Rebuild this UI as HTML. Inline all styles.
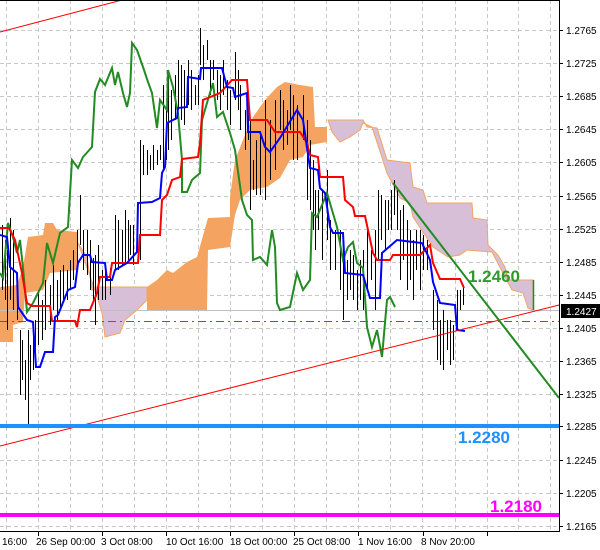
<!DOCTYPE html>
<html><head><meta charset="utf-8"><style>
html,body{margin:0;padding:0;background:#fff;width:600px;height:550px;overflow:hidden}
svg{display:block;font-family:"Liberation Sans",sans-serif}
</style></head><body>
<svg width="600" height="550" viewBox="0 0 600 550" xmlns="http://www.w3.org/2000/svg">
<rect width="600" height="550" fill="#fff"/>
<g stroke="#c8c8c8" stroke-width="1" stroke-dasharray="4,3" shape-rendering="crispEdges">
<path d="M6.5 0V531M38.5 0V531M70.5 0V531M102.5 0V531M134.5 0V531M166.5 0V531M198.5 0V531M230.5 0V531M262.5 0V531M294.5 0V531M326.5 0V531M358.5 0V531M390.5 0V531M422.5 0V531M455.5 0V531M487.5 0V531M518.5 0V531M550.5 0V531"/>
<path d="M0 30.5H559M0 63.5H559M0 96.5H559M0 129.5H559M0 162.5H559M0 196.5H559M0 229.5H559M0 262.5H559M0 295.5H559M0 328.5H559M0 361.5H559M0 394.5H559M0 426.5H559M0 460.5H559M0 493.5H559M0 526.5H559"/>
</g>
<!-- clouds -->
<polygon fill="#f4a460" points="0,287 17,285 23,267 28,237 43,235 45,223 53,223 57,230 77,232 77,270 50,273 43,290 25,293 23,322 13,325 13,342 0,342"/>
<polygon fill="#d8bfd8" stroke="#f4a460" stroke-width="1" points="78,243 87,257 92,290 97,287 147,287 147,300 137,310 125,320 120,333 105,337 102,313 95,290"/>
<polygon fill="#f4a460" points="147,287 157,280 167,270 173,273 187,262 197,257 208,218 230,217 230,197 235,160 247,130 253,117 265,100 277,87 285,82 300,85 313,87 315,127 327,127 327,142 310,145 303,157 290,160 280,178 267,187 250,190 240,200 235,215 230,247 208,250 207,310 147,310"/>
<polygon fill="#d8bfd8" stroke="#f4a460" stroke-width="1" points="328,120 363,120 367,127 377,128 387,160 410,163 413,187 423,190 427,203 472,203 473,218 487,220 488,245 498,255 505,267 508,280 533,280 533,310 528,308 523,293 512,290 505,277 492,252 467,250 460,255 448,257 433,247 413,217 410,203 400,198 387,173 372,127 363,123 360,130 350,137 340,142 332,132"/>
<line x1="533.5" y1="280" x2="533.5" y2="310" stroke="#228b22" stroke-width="1.5"/>
<!-- gray & dashed -->
<line x1="0" y1="310.5" x2="559" y2="310.5" stroke="#c0c0c0" stroke-width="1"/>
<line x1="0" y1="321.5" x2="559" y2="321.5" stroke="#228b22" stroke-width="1" stroke-dasharray="8,4,2,4"/>
<!-- bars -->
<g stroke="#000" stroke-width="1">
<path d="M2.5 225V290M5.5 240V300M7.5 250V330M10.5 218V300M13.5 230V310M17.5 280V320M20.5 330V395M22.5 340V380M25.5 360V400M28.5 330V425M30.5 345V380M33.5 330V370M35.5 320V365M38.5 290V345M42.5 300V340M45.5 280V330M50.5 285V325M53.5 265V310M57.5 280V320M60.5 270V310M63.5 265V300M67.5 270V300M70.5 260V290M73.5 250V280M77.5 230V270M80.5 195V245M83.5 230V270M87.5 230V275M90.5 240V290M93.5 258V300M95.5 255V325M98.5 245V300M102.5 270V300M105.5 270V300M110.5 268V295M115.5 215V270M118.5 220V270M122.5 230V265M125.5 210V265M128.5 220V260M130.5 225V255M133.5 225V265M137.5 215V250M140.5 140V260M143.5 145V175M147.5 150V175M150.5 155V170M153.5 145V170M157.5 150V165M160.5 145V160M163.5 85V170M166.5 110V160M168.5 70V150M171.5 90V140M175.5 75V120M178.5 60V110M181.5 65V120M184.5 70V125M188.5 60V105M191.5 70V110M195.5 85V105M198.5 75V105M200.5 28V65M203.5 45V80M207.5 40V60M210.5 60V95M213.5 60V80M217.5 70V100M220.5 75V110M223.5 60V95M227.5 80V110M230.5 90V125M235.5 52V100M238.5 70V110M240.5 85V130M245.5 110V150M248.5 100V140M250.5 120V210M253.5 160V190M256.5 140V195M260.5 135V195M265.5 100V200M270.5 120V180M275.5 100V170M280.5 90V130M283.5 100V150M287.5 110V145M290.5 85V130M293.5 95V160M297.5 105V160M303.5 95V140M307.5 120V200M310.5 140V210M313.5 160V230M315.5 190V250M318.5 190V230M322.5 190V260M327.5 170V240M330.5 220V270M335.5 230V270M340.5 230V290M343.5 250V320M347.5 260V300M350.5 250V290M353.5 255V300M357.5 270V310M360.5 260V300M363.5 250V310M367.5 230V290M371.5 250V280M375.5 230V310M378.5 190V260M381.5 195V240M385.5 200V250M388.5 200V230M391.5 190V230M394.5 180V215M397.5 190V230M400.5 210V280M403.5 205V260M407.5 220V290M410.5 230V280M413.5 240V300M416.5 230V270M420.5 230V290M423.5 235V270M427.5 240V270M433.5 290V330M437.5 300V360M440.5 320V365M443.5 310V370M447.5 320V350M450.5 320V365M453.5 325V360M457.5 290V330M460.5 290V310M463.5 285V305"/>
</g>
<!-- lines -->
<polyline fill="none" stroke="#228b22" stroke-width="2" points="0,273 3,278 8,223 13,237 17,253 20,240 23,268 27,312 33,303 43,283 47,243 53,263 60,233 68,227 72,160 78,168 83,157 92,147 95,92 100,79 105,85 112,68 115,85 118,72 123,93 127,107 130,93 132,43 137,50 143,67 148,82 152,93 157,128 160,100 167,110 168,70 173,87 178,113 182,160 182,192 187,192 192,180 200,173 202,120 207,103 213,83 217,117 223,112 230,133 235,150 242,200 247,215 252,220 253,260 260,257 267,265 272,230 275,247 277,303 280,310 290,307 297,273 303,290 310,280 312,213 317,217 327,193 337,227 343,260 348,247 353,242 357,263 363,268 367,327 372,347 377,330 382,357 387,300 390,297 395,307"/>
<polyline fill="none" stroke="#ff0000" stroke-width="2" points="0,228 9,228 15,240 22,273 27,303 32,306 50,306 52,321 75,321 77,327 80,310 90,310 97,293 100,277 110,277 112,263 138,263 140,235 160,235 162,200 167,195 172,180 180,177 182,159 198,157 200,143 203,100 220,93 232,80 247,80 250,120 267,120 275,132 300,132 307,143 310,155 318,157 320,177 343,177 345,200 353,207 355,216 365,216 373,253 377,260 390,260 393,255 420,255 430,245 433,263 440,279 460,279 464,288"/>
<polyline fill="none" stroke="#0000ff" stroke-width="2" points="0,235 7,237 10,267 17,273 18,307 27,320 33,322 36,367 40,367 45,352 53,352 55,317 58,315 68,290 75,287 78,263 83,255 90,255 92,262 105,263 107,280 112,280 115,270 127,263 137,252 138,203 152,202 160,198 162,173 165,167 167,123 177,118 178,108 187,107 188,77 200,79 201,68 222,68 227,87 233,88 235,97 247,93 248,132 260,132 265,147 270,152 280,138 297,110 303,120 307,148 310,168 318,170 320,188 325,193 330,227 333,233 343,233 345,273 363,275 370,298 380,298 382,253 397,240 413,242 422,243 430,260 433,282 440,303 455,305 457,330 465,331"/>
<!-- trend lines -->
<line x1="0" y1="32" x2="122" y2="0" stroke="#ff0000" stroke-width="1"/>
<line x1="0" y1="446" x2="559" y2="305" stroke="#ff0000" stroke-width="1"/>
<line x1="393" y1="183" x2="559" y2="398" stroke="#228b22" stroke-width="2"/>
<!-- horizontal levels -->
<rect x="0" y="424" width="559" height="4" fill="#1e90ff"/>
<rect x="0" y="513" width="559" height="4" fill="#ff00ff"/>
<g font-size="17" font-weight="bold">
<text x="468" y="282" fill="#2e9a2e">1.2460</text>
<text x="458" y="443" fill="#1e90ff">1.2280</text>
<text x="490" y="512" fill="#ff00ff">1.2180</text>
</g>
<!-- frame -->
<line x1="0" y1="0.5" x2="559" y2="0.5" stroke="#000"/>
<line x1="559.5" y1="0" x2="559.5" y2="532" stroke="#000"/>
<line x1="0" y1="531.5" x2="560" y2="531.5" stroke="#000"/>
<g stroke="#000" shape-rendering="crispEdges">
<path d="M559 30.5h4M559 63.5h4M559 96.5h4M559 129.5h4M559 162.5h4M559 196.5h4M559 229.5h4M559 262.5h4M559 295.5h4M559 328.5h4M559 361.5h4M559 394.5h4M559 426.5h4M559 460.5h4M559 493.5h4M559 526.5h4"/>
<path d="M38.5 531v5M102.5 531v5M166.5 531v5M230.5 531v5M294.5 531v5M358.5 531v5M423.5 531v5M487.5 531v5"/>
</g>
<g font-size="10" fill="#000">
<text x="566" y="34">1.2765</text><text x="566" y="67">1.2725</text><text x="566" y="100">1.2685</text>
<text x="566" y="133">1.2645</text><text x="566" y="166">1.2605</text><text x="566" y="200">1.2565</text>
<text x="566" y="233">1.2525</text><text x="566" y="266">1.2485</text><text x="566" y="299">1.2445</text>
<text x="566" y="332">1.2405</text><text x="566" y="365">1.2365</text><text x="566" y="398">1.2325</text>
<text x="566" y="430">1.2285</text><text x="566" y="464">1.2245</text><text x="566" y="497">1.2205</text>
<text x="566" y="530">1.2165</text>
<text x="2" y="545">16:00</text><text x="36" y="545">26 Sep 00:00</text><text x="101" y="545">3 Oct 08:00</text>
<text x="166" y="545">10 Oct 16:00</text><text x="230" y="545">18 Oct 00:00</text><text x="293" y="545">25 Oct 08:00</text>
<text x="358" y="545">1 Nov 16:00</text><text x="421" y="545">8 Nov 20:00</text>
</g>
<rect x="561" y="304" width="39" height="14" fill="#000"/>
<text x="566" y="315" font-size="10" fill="#fff">1.2427</text>
</svg>
</body></html>
